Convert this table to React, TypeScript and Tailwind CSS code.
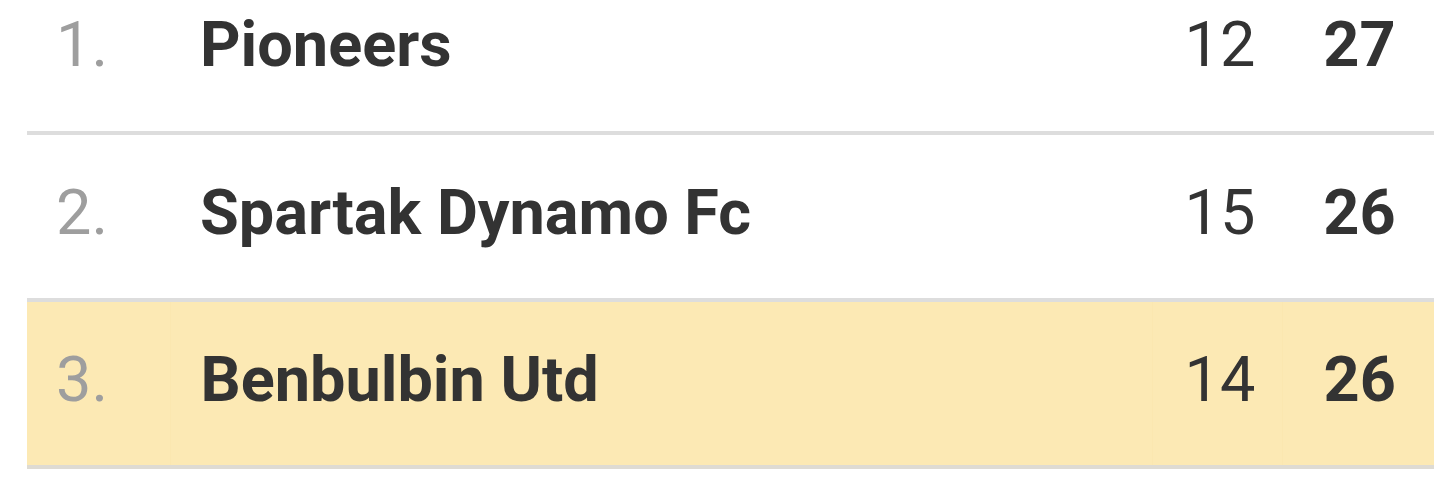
import React from "react";

const standings = [
  { rank: 1, team: "Pioneers", played: 12, points: 27 },
  { rank: 2, team: "Spartak Dynamo Fc", played: 15, points: 26 },
  { rank: 3, team: "Benbulbin Utd", played: 14, points: 26, highlight: true },
];

export default function App() {
  return (
    <div className="w-[1440px] h-[480px] overflow-hidden bg-white font-['Roboto',sans-serif] text-[#333333]">
      <div className="pl-[27px] pr-[6px]">
        <table className="w-full -mt-[34px] border-collapse text-[63px] leading-none">
          <tbody>
            {standings.map((row) => (
              <tr
                key={row.rank}
                className={`h-[167px] border-b-[4px] ${
                  row.highlight ? "bg-[#fce9b4] border-[#dedbd3]" : "border-[#dddddd]"
                }`}
              >
                <td
                  className={`w-[143px] pl-[29px] pb-[8px] font-normal text-[#9e9e9e] ${
                    row.highlight ? "border-r border-[#fbe7b0]" : ""
                  }`}
                >
                  {row.rank}.
                </td>
                <td
                  className={`pl-[30px] pb-[8px] font-bold ${
                    row.highlight ? "border-r border-[#fbe7b0]" : ""
                  }`}
                >
                  {row.team}
                </td>
                <td
                  className={`w-[130px] pl-[6px] pb-[8px] text-center font-normal ${
                    row.highlight ? "border-r border-[#fbe7b0]" : ""
                  }`}
                >
                  {row.played}
                </td>
                <td className="w-[152px] pl-[3px] pb-[8px] text-center font-bold">{row.points}</td>
              </tr>
            ))}
          </tbody>
        </table>
      </div>
    </div>
  );
}
